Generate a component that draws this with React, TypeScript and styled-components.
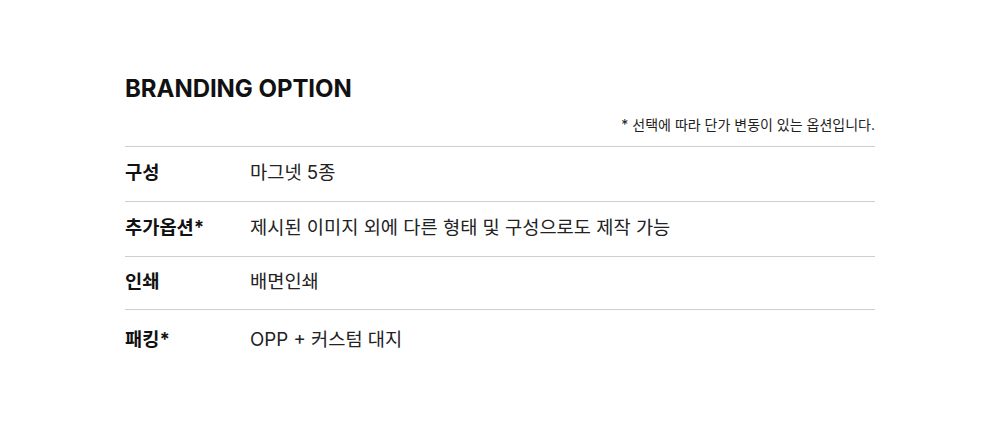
import React from "react";
import styled, { createGlobalStyle } from "styled-components";

const GlobalStyle = createGlobalStyle`
  html, body { margin: 0; padding: 0; background: #ffffff; }
  body { font-family: Inter, "Noto Sans CJK KR", sans-serif; color: #111111; }
`;

const Page = styled.main`
  width: 750px;
  margin: 0 auto;
  padding-top: 74px;
`;

const Title = styled.h2`
  margin: 0;
  font-family: Inter, "Noto Sans CJK KR", sans-serif;
  font-size: 24px;
  font-weight: 700;
  line-height: 29px;
  color: #111111;
  letter-spacing: -0.05px;
`;

const Note = styled.p`
  margin: 12px 0 0;
  text-align: right;
  font-family: Inter, "Noto Sans CJK KR", sans-serif;
  font-size: 14px;
  line-height: 20px;
  color: #222222;
  padding-bottom: 11px;
  border-bottom: 1px solid #cfcfcf;
`;

const Table = styled.dl`
  margin: 0;
`;

const Row = styled.div<{ $last?: boolean; $h: number }>`
  display: grid;
  grid-template-columns: 125px 1fr;
  align-items: center;
  height: ${(p) => p.$h}px;
  border-bottom: ${(p) => (p.$last ? "none" : "1px solid #cfcfcf")};
`;

const Label = styled.dt`
  font-family: Inter, "Noto Sans CJK KR", sans-serif;
  font-size: 18.7px;
  line-height: 24px;
  font-weight: 700;
  color: #111111;
  margin-top: -2px;
`;

const Value = styled.dd`
  margin: -2px 0 0;
  font-family: Inter, "Noto Sans CJK KR", sans-serif;
  font-size: 18.7px;
  line-height: 24px;
  font-weight: 400;
  color: #222222;
`;

const rows = [
  { label: "구성", value: "마그넷 5종", h: 54 },
  { label: "추가옵션*", value: "제시된 이미지 외에 다른 형태 및 구성으로도 제작 가능", h: 54 },
  { label: "인쇄", value: "배면인쇄", h: 52 },
  { label: "패킹*", value: "OPP + 커스텀 대지", h: 62 },
];

export default function App() {
  return (
    <>
      <GlobalStyle />
      <Page>
        <Title>BRANDING OPTION</Title>
        <Note>* 선택에 따라 단가 변동이 있는 옵션입니다.</Note>
        <Table>
          {rows.map((r, i) => (
            <Row key={r.label} $h={r.h} $last={i === rows.length - 1}>
              <Label>{r.label}</Label>
              <Value>{r.value}</Value>
            </Row>
          ))}
        </Table>
      </Page>
    </>
  );
}
